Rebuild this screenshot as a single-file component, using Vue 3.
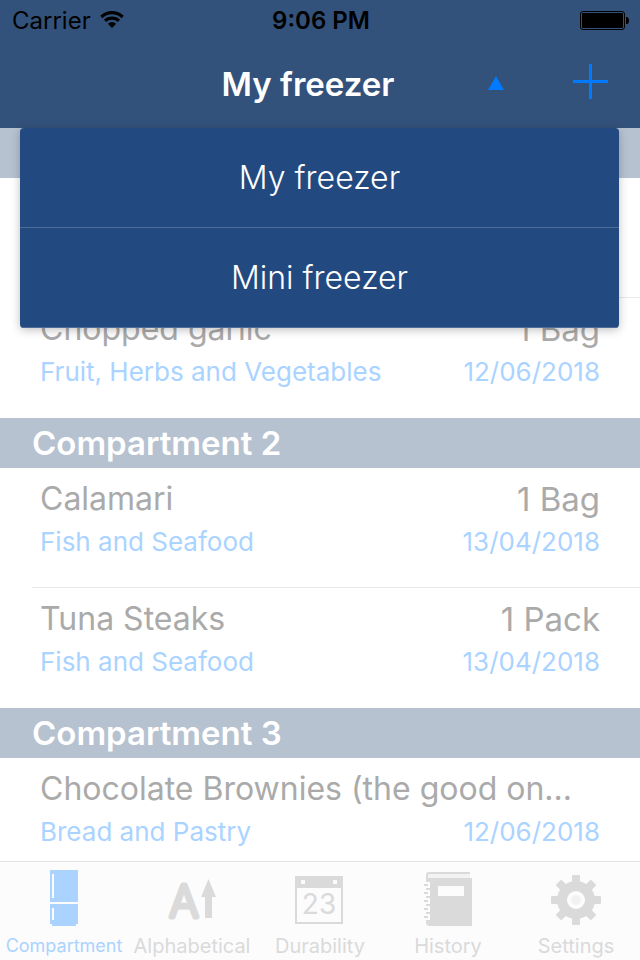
<template>
  <div class="phone">
    <header class="top">
      <div class="status">
        <span class="carrier">
          Carrier
          <svg class="wifi" width="26" height="20" viewBox="0 0 26 20" aria-hidden="true">
            <path d="M1.2 5.8a17 17 0 0 1 23.6 0l-2.2 2.4a13.8 13.8 0 0 0-19.2 0z" />
            <path d="M5 9.8a11.4 11.4 0 0 1 16 0l-2.2 2.3a8.2 8.2 0 0 0-11.6 0z" />
            <path d="M8.8 13.8a6 6 0 0 1 8.4 0L13 18z" />
          </svg>
        </span>
        <span class="time">9:06 PM</span>
        <span class="battery">
          <svg width="50" height="20" viewBox="0 0 50 20" aria-label="Battery">
            <rect x="0.5" y="1.5" width="44" height="18" rx="2.5" fill="none" stroke="#000" />
            <rect x="2" y="3" width="41" height="15" rx="1" />
            <path d="M46 7h1.500q1.500 1 1.500 3.500t-1.500 3.500H46z" />
          </svg>
        </span>
      </div>

      <div class="navbar">
        <h1>{{ selected }}</h1>
        <div class="actions">
          <button class="icon-btn" aria-label="Switch freezer" @click="open = !open">
            <svg width="16" height="16" viewBox="0 0 16 16"><path d="M8 0l8 14H0z" /></svg>
          </button>
          <button class="icon-btn" aria-label="Add item">
            <svg width="35" height="40" viewBox="0 0 35 40">
              <path d="M0 16h16V0h3v16h16v3H19v16h-3V19H0z" />
            </svg>
          </button>
        </div>
      </div>

      <div v-if="open" class="menu">
        <button v-for="name in freezers" :key="name" @click="select(name)">{{ name }}</button>
      </div>
    </header>

    <main class="list">
      <section v-for="(group, g) in groups" :key="g">
        <h2>{{ group.title }}</h2>
        <ul>
          <li v-for="(item, i) in group.items" :key="i">
            <div class="line name">
              <span>{{ item.name }}</span>
              <span class="amount">{{ item.amount }}</span>
            </div>
            <div class="line info">
              <span>{{ item.category }}</span>
              <span>{{ item.date }}</span>
            </div>
          </li>
        </ul>
      </section>
    </main>

    <nav class="tabs">
      <button
        v-for="tab in tabs"
        :key="tab"
        :class="{ active: tab === currentTab }"
        @click="currentTab = tab"
      >
        <svg width="60" height="60" viewBox="0 0 60 60" aria-hidden="true">
          <g v-if="tab === 'Compartment'">
            <path d="M16 2h28v32H16zM16 36h28v20h-2v2H18v-2h-2z" />
            <path class="cut" d="M18 6h2v24h-2zM18 40h2v12h-2z" />
          </g>
          <g v-else-if="tab === 'Alphabetical'">
            <text class="letter" x="22" y="49">A</text>
            <path d="M46.500 11l7.500 18h-4v21h-7V29h-4z" />
          </g>
          <g v-else-if="tab === 'Durability'">
            <path fill-rule="evenodd" d="M5 8h48v48H5zM7 20v34h44V20z" />
            <path class="cut" d="M11 12h4v4h-4zM43 12h4v4h-4z" />
            <text class="day" x="29" y="46">23</text>
          </g>
          <g v-else-if="tab === 'History'">
            <path d="M8 14V7q0-3 3-3h41v2H12q-2 0-2 2v2h44v48H12q-4 0-4-4v-2h4V14z" />
            <path class="pages" d="M12 6h40v4H10V8q0-2 2-2z" />
            <path d="M6 16h4v2H6zM6 24h4v2H6zM6 32h4v2H6zM6 40h4v2H6zM6 48h4v2H6zM8 20h4v2H8zM8 28h4v2H8zM8 36h4v2H8zM8 44h4v2H8z" />
            <path class="cut" d="M20 18h26v10H20z" />
          </g>
          <g v-else>
            <circle cx="30" cy="32" r="19" />
            <rect
              v-for="n in 8"
              :key="n"
              x="26"
              y="7"
              width="8"
              height="10"
              rx="1"
              :transform="`rotate(${n * 45} 30 32)`"
            />
            <circle class="cut" cx="30" cy="32" r="9" />
            <circle class="pages" cx="30" cy="32" r="5" />
          </g>
        </svg>
        <span>{{ tab }}</span>
      </button>
    </nav>
  </div>
</template>

<script setup>
import { ref } from 'vue'

const freezers = ['My freezer', 'Mini freezer']
const selected = ref('My freezer')
const open = ref(true)

const tabs = ['Compartment', 'Alphabetical', 'Durability', 'History', 'Settings']
const currentTab = ref('Compartment')

const groups = ref([
  {
    title: '',
    items: [
      { name: '', amount: '', category: '', date: '' },
      { name: 'Chopped garlic', amount: '1 Bag', category: 'Fruit, Herbs and Vegetables', date: '12/06/2018' },
    ],
  },
  {
    title: 'Compartment 2',
    items: [
      { name: 'Calamari', amount: '1 Bag', category: 'Fish and Seafood', date: '13/04/2018' },
      { name: 'Tuna Steaks', amount: '1 Pack', category: 'Fish and Seafood', date: '13/04/2018' },
    ],
  },
  {
    title: 'Compartment 3',
    items: [
      { name: 'Chocolate Brownies (the good on...', amount: '', category: 'Bread and Pastry', date: '12/06/2018' },
    ],
  },
])

function select(name) {
  selected.value = name
  open.value = false
}
</script>

<style>
body {
  margin: 0;
}
</style>

<style scoped>
.phone {
  display: flex;
  flex-direction: column;
  height: 100vh;
  overflow: hidden;
  background: #fff;
  font-family: Inter, "Liberation Sans", sans-serif;
}

button {
  border: 0;
  padding: 0;
  background: none;
  font-family: inherit;
  cursor: pointer;
}

.top {
  position: relative;
  z-index: 1;
  flex: none;
  background: #33527b;
}

.status {
  display: grid;
  grid-template-columns: 1fr auto 1fr;
  align-items: center;
  height: 40px;
  padding: 0 10px 0 12px;
  font-size: 24px;
}

.carrier {
  display: flex;
  align-items: center;
  gap: 8px;
}

.time {
  font-weight: 600;
}

.battery {
  display: flex;
  justify-content: flex-end;
}

.navbar {
  display: grid;
  grid-template-columns: 1fr auto 1fr;
  align-items: center;
  height: 88px;
  padding: 0 32px 0 8px;
}

h1 {
  grid-column: 2;
  margin: 0;
  color: #fff;
  font-size: 33px;
  font-weight: 600;
}

.actions {
  display: flex;
  justify-content: flex-end;
  align-items: center;
  gap: 69px;
}

.icon-btn {
  display: flex;
  fill: #007aff;
}

.menu {
  position: absolute;
  top: 100%;
  left: 20px;
  right: 21px;
  border-radius: 4px;
  overflow: hidden;
  background: #234a80;
  box-shadow: 0 2px 10px rgba(0, 0, 0, 0.25);
}

.menu button {
  display: block;
  width: 100%;
  height: 100px;
  border-bottom: 1px solid #4d6d99;
  color: #fff;
  font-size: 32px;
  font-weight: 300;
}

.list {
  flex: 1;
  min-height: 0;
  overflow: hidden;
}

h2 {
  min-height: 50px;
  margin: 0;
  padding: 0 32px;
  background: #b7c2d1;
  color: #fff;
  font-size: 33px;
  font-weight: 600;
  line-height: 50px;
}

ul {
  margin: 0;
  padding: 0 0 0 32px;
  list-style: none;
}

li {
  box-sizing: border-box;
  height: 120px;
  padding: 8px 40px 0 8px;
}

li:not(:last-child) {
  border-bottom: 1px solid #e9e9eb;
}

.line {
  display: flex;
  justify-content: space-between;
  white-space: nowrap;
}

.name {
  min-height: 46px;
  color: #aaa;
  font-size: 32px;
  line-height: 46px;
}

.amount {
  font-size: 33px;
}

.info {
  color: #aad3ff;
  font-size: 26px;
  line-height: 40px;
}

.tabs {
  display: grid;
  grid-template-columns: repeat(5, minmax(0, 1fr));
  flex: none;
  height: 98px;
  border-top: 1px solid #e2e3e3;
  background: #fcfcfd;
}

.tabs button {
  display: flex;
  flex-direction: column;
  align-items: center;
  padding-top: 6px;
  color: #dadada;
  fill: currentColor;
  font-size: 20px;
  line-height: 36px;
}

.tabs svg {
  flex: none;
}

.tabs .active {
  color: #aad3ff;
  font-size: 18px;
}

.cut {
  fill: #fcfcfd;
}

.pages {
  fill: #f2f2f2;
}

.letter {
  font-size: 44px;
  font-weight: 200;
  text-anchor: middle;
  stroke: currentColor;
  stroke-width: 5px;
  stroke-linejoin: round;
}

.day {
  font-size: 28px;
  text-anchor: middle;
}
</style>
